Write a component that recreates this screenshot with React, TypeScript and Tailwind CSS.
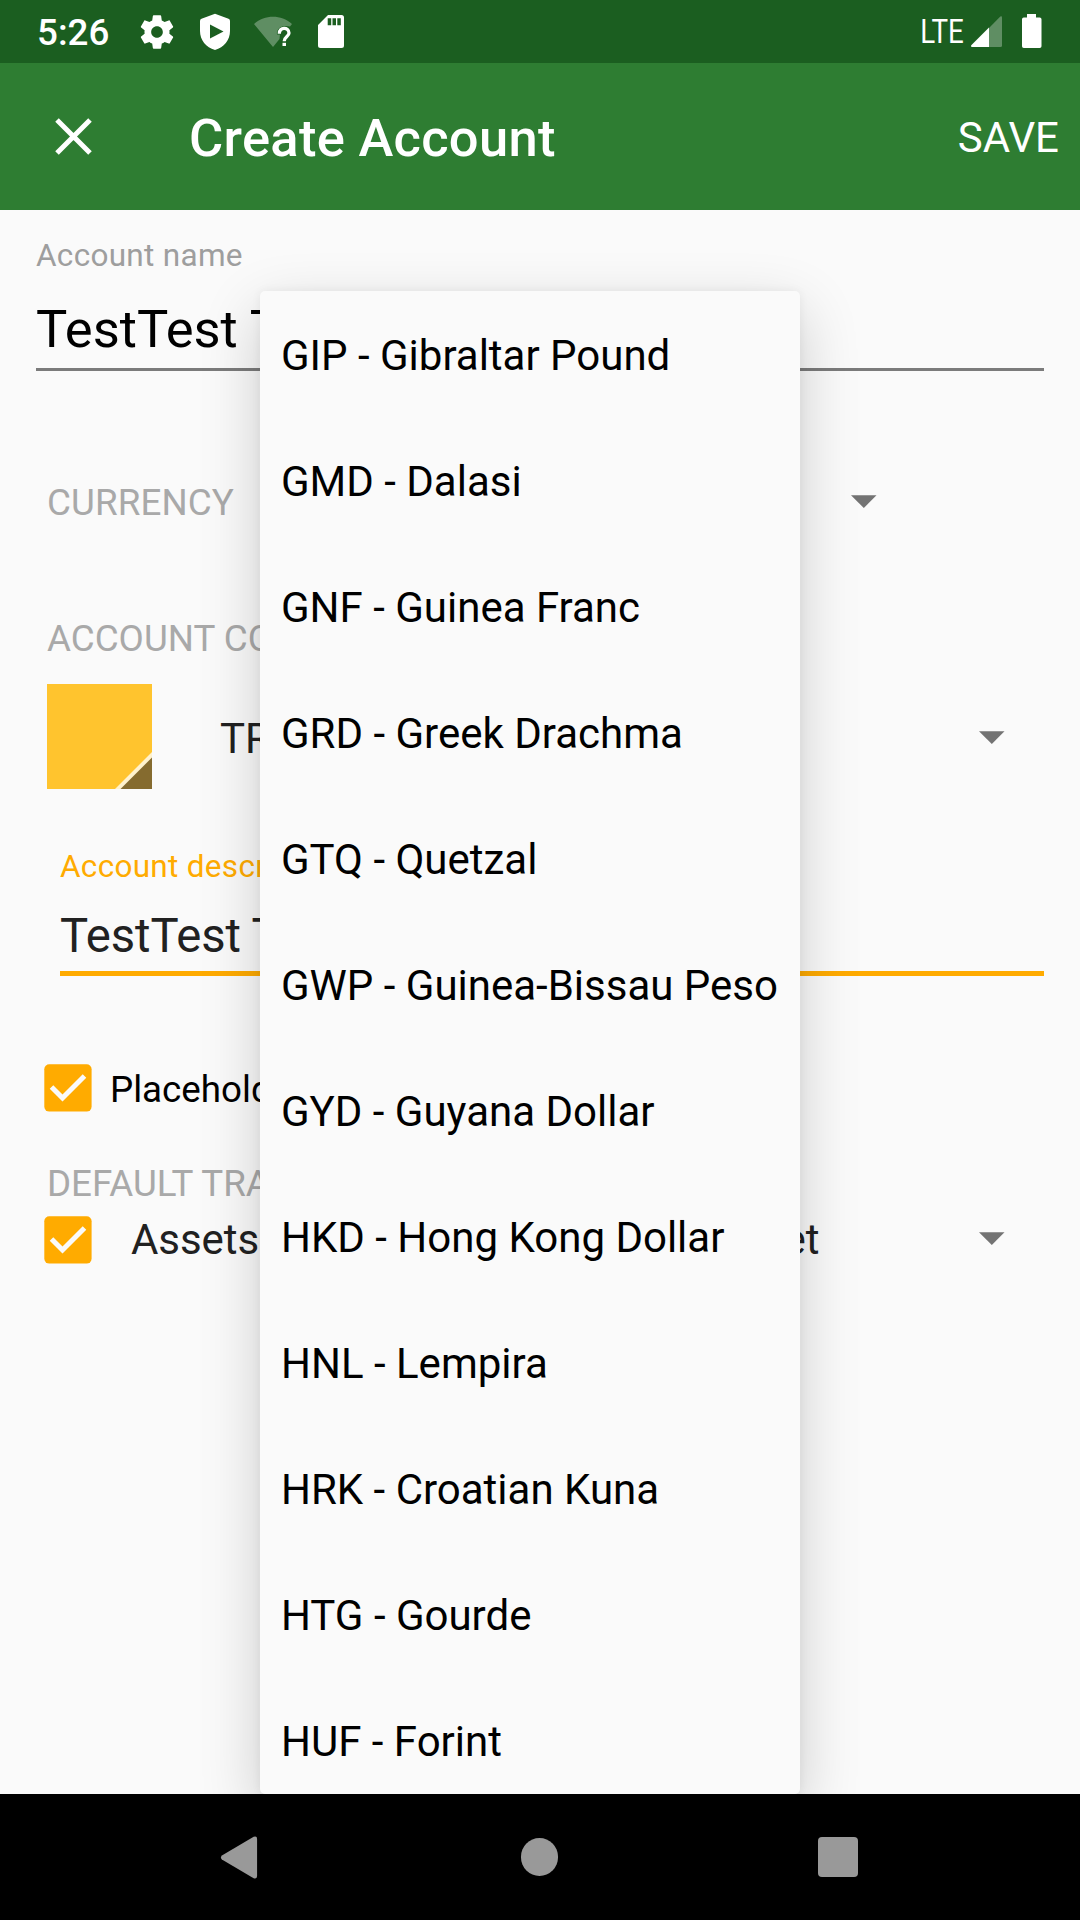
import React from "react";

const currencies = [
  "GIP - Gibraltar Pound",
  "GMD - Dalasi",
  "GNF - Guinea Franc",
  "GRD - Greek Drachma",
  "GTQ - Quetzal",
  "GWP - Guinea-Bissau Peso",
  "GYD - Guyana Dollar",
  "HKD - Hong Kong Dollar",
  "HNL - Lempira",
  "HRK - Croatian Kuna",
  "HTG - Gourde",
  "HUF - Forint",
];

function StatusBar() {
  return (
    <div className="flex h-[63px] shrink-0 items-start bg-[#1b5e20] text-white">
      <span className="ml-[37px] mt-[5px] w-[104px] text-[36.75px] font-medium leading-[56px]">5:26</span>
      <svg className="mt-[11.5px] size-[40px] -ml-[4px] shrink-0" viewBox="0 0 24 24" fill="currentColor">
        <path d="M19.43 12.98c.04-.32.07-.64.07-.98s-.03-.66-.07-.98l2.11-1.65c.19-.15.24-.42.12-.64l-2-3.46c-.12-.22-.39-.3-.61-.22l-2.49 1c-.52-.4-1.08-.73-1.69-.98l-.38-2.65C14.46 2.18 14.25 2 14 2h-4c-.25 0-.46.18-.49.42l-.38 2.65c-.61.25-1.17.59-1.69.98l-2.49-1c-.23-.09-.49 0-.61.22l-2 3.46c-.13.22-.07.49.12.64l2.11 1.65c-.04.32-.07.65-.07.98s.03.66.07.98l-2.11 1.65c-.19.15-.24.42-.12.64l2 3.46c.12.22.39.3.61.22l2.49-1c.52.4 1.08.73 1.69.98l.38 2.65c.03.24.24.42.49.42h4c.25 0 .46-.18.49-.42l.38-2.65c.61-.25 1.17-.59 1.69-.98l2.49 1c.23.09.49 0 .61-.22l2-3.46c.12-.22.07-.49-.12-.64l-2.11-1.65zM12 15.5c-1.93 0-3.5-1.57-3.5-3.5s1.57-3.5 3.5-3.5 3.5 1.57 3.5 3.5-1.57 3.5-3.5 3.5z" />
      </svg>
      <svg className="ml-[23px] mt-[13px] h-[38px] w-[30px] shrink-0" viewBox="0 0 30 38" fill="currentColor">
        <path fillRule="evenodd" d="M15 .7 28.5 5.8Q30 6.4 30 8V18C30 27 24 34.500 15 37 6 34.500 0 27 0 18V8Q0 6.400 1.500 5.800ZM10 11.500V25.500L23.500 18.500Z" />
      </svg>
      <svg className="ml-[24px] mt-[13px] h-[38px] w-[40px] shrink-0" viewBox="0 0 40 38">
        <path d="M0 11C11 1.300 27 1.300 38 11L36 13.500C29 11.500 22 15 23 21.500H26L25.500 26 19 34Z" fill="#fff" opacity=".3" />
        <path d="M25.300 20.700C25 13.700 35 13.700 35 20 35 23.500 30.200 23.500 30.200 28.300" fill="none" stroke="#fff" strokeWidth="3.300" />
        <rect x="28.500" y="29.800" width="3.500" height="3.200" fill="#fff" />
      </svg>
      <svg className="ml-[24px] mt-[15px] h-[33px] w-[26px] shrink-0" viewBox="0 0 26 33" fill="currentColor">
        <path fillRule="evenodd" d="M10 0H23.500Q26 0 26 2.500V30.500Q26 33 23.500 33H2.500Q0 33 0 30.500V10ZM9.700 3.300V10.300H13.200V3.300ZM14.500 3.300V10.300H18V3.300ZM19.300 3.300V10.300H22.800V3.300Z" />
      </svg>
      <span className="ml-auto mr-[7px] mt-[4px] origin-right scale-x-[0.84] text-[33px] leading-[56px]">LTE</span>
      <svg className="mt-[16px] h-[31px] w-[31px] shrink-0" viewBox="0 0 31 31" fill="#fff">
        <path d="M18 12 29.300.5Q31-.5 31 1.500V29.500Q31 31 29.500 31H18Z" opacity=".3" />
        <path d="M18 11.500V31H1Q-.8 30.500.5 29Z" />
      </svg>
      <svg className="ml-[20px] mr-[38px] mt-[14px] h-[34px] w-[20px] shrink-0" viewBox="0 0 20 34" fill="#fff">
        <path d="M5 0H14V3.500H17.700Q19.500 3.500 19.500 5.300V32.200Q19.500 34 17.700 34H1.800Q0 34 0 32.200V5.300Q0 3.500 1.800 3.500H5Z" />
      </svg>
    </div>
  );
}

function Toolbar() {
  return (
    <header className="flex h-[147px] shrink-0 items-center bg-[#2e7d32] text-white">
      <svg className="ml-[55px] h-[37px] w-[37px] shrink-0" viewBox="0 0 37 37" stroke="#fff" strokeWidth="5">
        <path d="M2 2 35 35M35 2 2 35" />
      </svg>
      <h1 className="ml-[97px] mt-[3px] text-[52.5px] font-medium leading-[62px] tracking-[0.28px]">Create Account</h1>
      <button className="ml-auto mr-[21px] mt-[3px] text-[42px] leading-[50px]">SAVE</button>
    </header>
  );
}

function Caret() {
  return (
    <svg className="h-[13px] w-[26px] shrink-0" viewBox="0 0 26 13" fill="#737373">
      <path d="M0 .3H25.500L12.800 13Z" />
    </svg>
  );
}

function Check() {
  return (
    <span className="flex size-[48px] shrink-0 items-center justify-center">
      <svg className="size-[48px]" viewBox="0 0 48 48" fill="none" stroke="#fafafa" strokeWidth="5">
        <rect x=".3" y=".3" width="47.300" height="47.300" rx="5" fill="#ffab00" stroke="none" />
        <path d="M7.500 23 18.500 34 40.500 12" />
      </svg>
    </span>
  );
}

function AccountForm() {
  return (
    <main className="flex flex-col whitespace-nowrap">
      <label className="ml-[36px] mt-[26px] h-[40px] text-[31.5px] leading-[40px] tracking-[0.3px] text-[#9e9e9e]">Account name</label>
      <div className="ml-[36px] mr-[36px] mt-[22px] flex h-[73px] flex-col border-b-[3px] border-[#7b7b7b] text-[52.5px] leading-[62px] text-black">
        TestTest Test
      </div>
      <div className="mt-[109px] flex h-[46px] items-center pl-[47px]">
        <span className="w-[803.5px] text-[36.75px] leading-[46px] tracking-[0.1px] text-[#a9a9a9]">CURRENCY</span>
        <span className="mb-[3px] flex">
          <Caret />
        </span>
      </div>
      <span className="ml-[47px] mt-[90px] h-[46px] text-[36.75px] leading-[46px] text-[#a9a9a9]">ACCOUNT COLOR &amp; TYPE</span>
      <div className="mt-[22px] flex h-[105px] items-center pl-[47px]">
        <svg className="size-[105px] shrink-0" viewBox="0 0 105 105">
          <rect width="105" height="105" fill="#ffc42e" />
          <path d="M68 105 105 68V105Z" fill="#fff2cd" />
          <path d="M73.500 105 105 73.500V105Z" fill="#856b2f" />
        </svg>
        <span className="ml-[68px] mt-[5px] w-[758.5px] text-[42px] leading-[50px] text-[#212121]">TRADING</span>
        <span className="mt-[2px] flex">
          <Caret />
        </span>
      </div>
      <label className="ml-[60px] mt-[58px] h-[40px] text-[31.5px] leading-[40px] tracking-[0.3px] text-[#ffab00]">Account description</label>
      <div className="ml-[60px] mr-[36px] mt-[21px] h-[68px] border-b-[5px] border-[#ffab00] text-[47.25px] leading-[56px] tracking-[-0.1px] text-[#212121]">
        TestTest Test
      </div>
      <div className="mt-[88px] flex h-[48px] items-center pl-[44px]">
        <Check />
        <span className="ml-[18px] mt-[3px] text-[36.75px] leading-[46px] text-black">Placeholder account</span>
      </div>
      <span className="ml-[47px] mt-[49px] h-[46px] text-[36.75px] leading-[46px] text-[#a9a9a9]">DEFAULT TRANSFER ACCOUNT</span>
      <div className="mt-[9px] flex h-[48px] items-center pl-[44px]">
        <Check />
        <span className="ml-[39px] w-[847.5px] text-[42px] leading-[50px] tracking-[-0.06px] text-[#212121]">Assets:Current Assets:Cash in Wallet</span>
        <span className="mb-[3px] flex">
          <Caret />
        </span>
      </div>
    </main>
  );
}

function NavBar() {
  return (
    <nav className="relative z-20 flex h-[126px] items-center bg-black">
      <svg className="ml-[219.5px] h-[43px] w-[38px]" viewBox="0 0 38 44" fill="#999">
        <path d="M1.500 20 34 .800Q37.500-.5 37.500 3V41Q37.500 44.500 34 43.200L1.500 24Q-.5 22 1.500 20Z" />
      </svg>
      <div className="ml-[263px] size-[37.5px] rounded-full bg-[#999]" />
      <div className="ml-[259.5px] size-[40px] rounded-[4px] bg-[#999]" />
    </nav>
  );
}

export default function App() {
  return (
    <div className="relative flex h-[1920px] w-[1080px] flex-col overflow-hidden bg-[#fafafa] font-[Roboto,sans-serif]">
      <StatusBar />
      <Toolbar />
      <div className="h-[1584px] shrink-0">
        <AccountForm />
      </div>
      <ul className="absolute left-[260px] top-[291px] z-10 h-[1503px] w-[540px] overflow-hidden rounded-[5px] bg-[#fafafa] pt-[2px] shadow-[0_20px_60px_rgba(0,0,0,0.19),0_0_10px_rgba(0,0,0,0.06)]">
        {currencies.map((name) => (
          <li key={name} className="h-[126px] whitespace-nowrap pl-[21px] text-[42px] leading-[126px] text-black">
            {name}
          </li>
        ))}
      </ul>
      <NavBar />
    </div>
  );
}
